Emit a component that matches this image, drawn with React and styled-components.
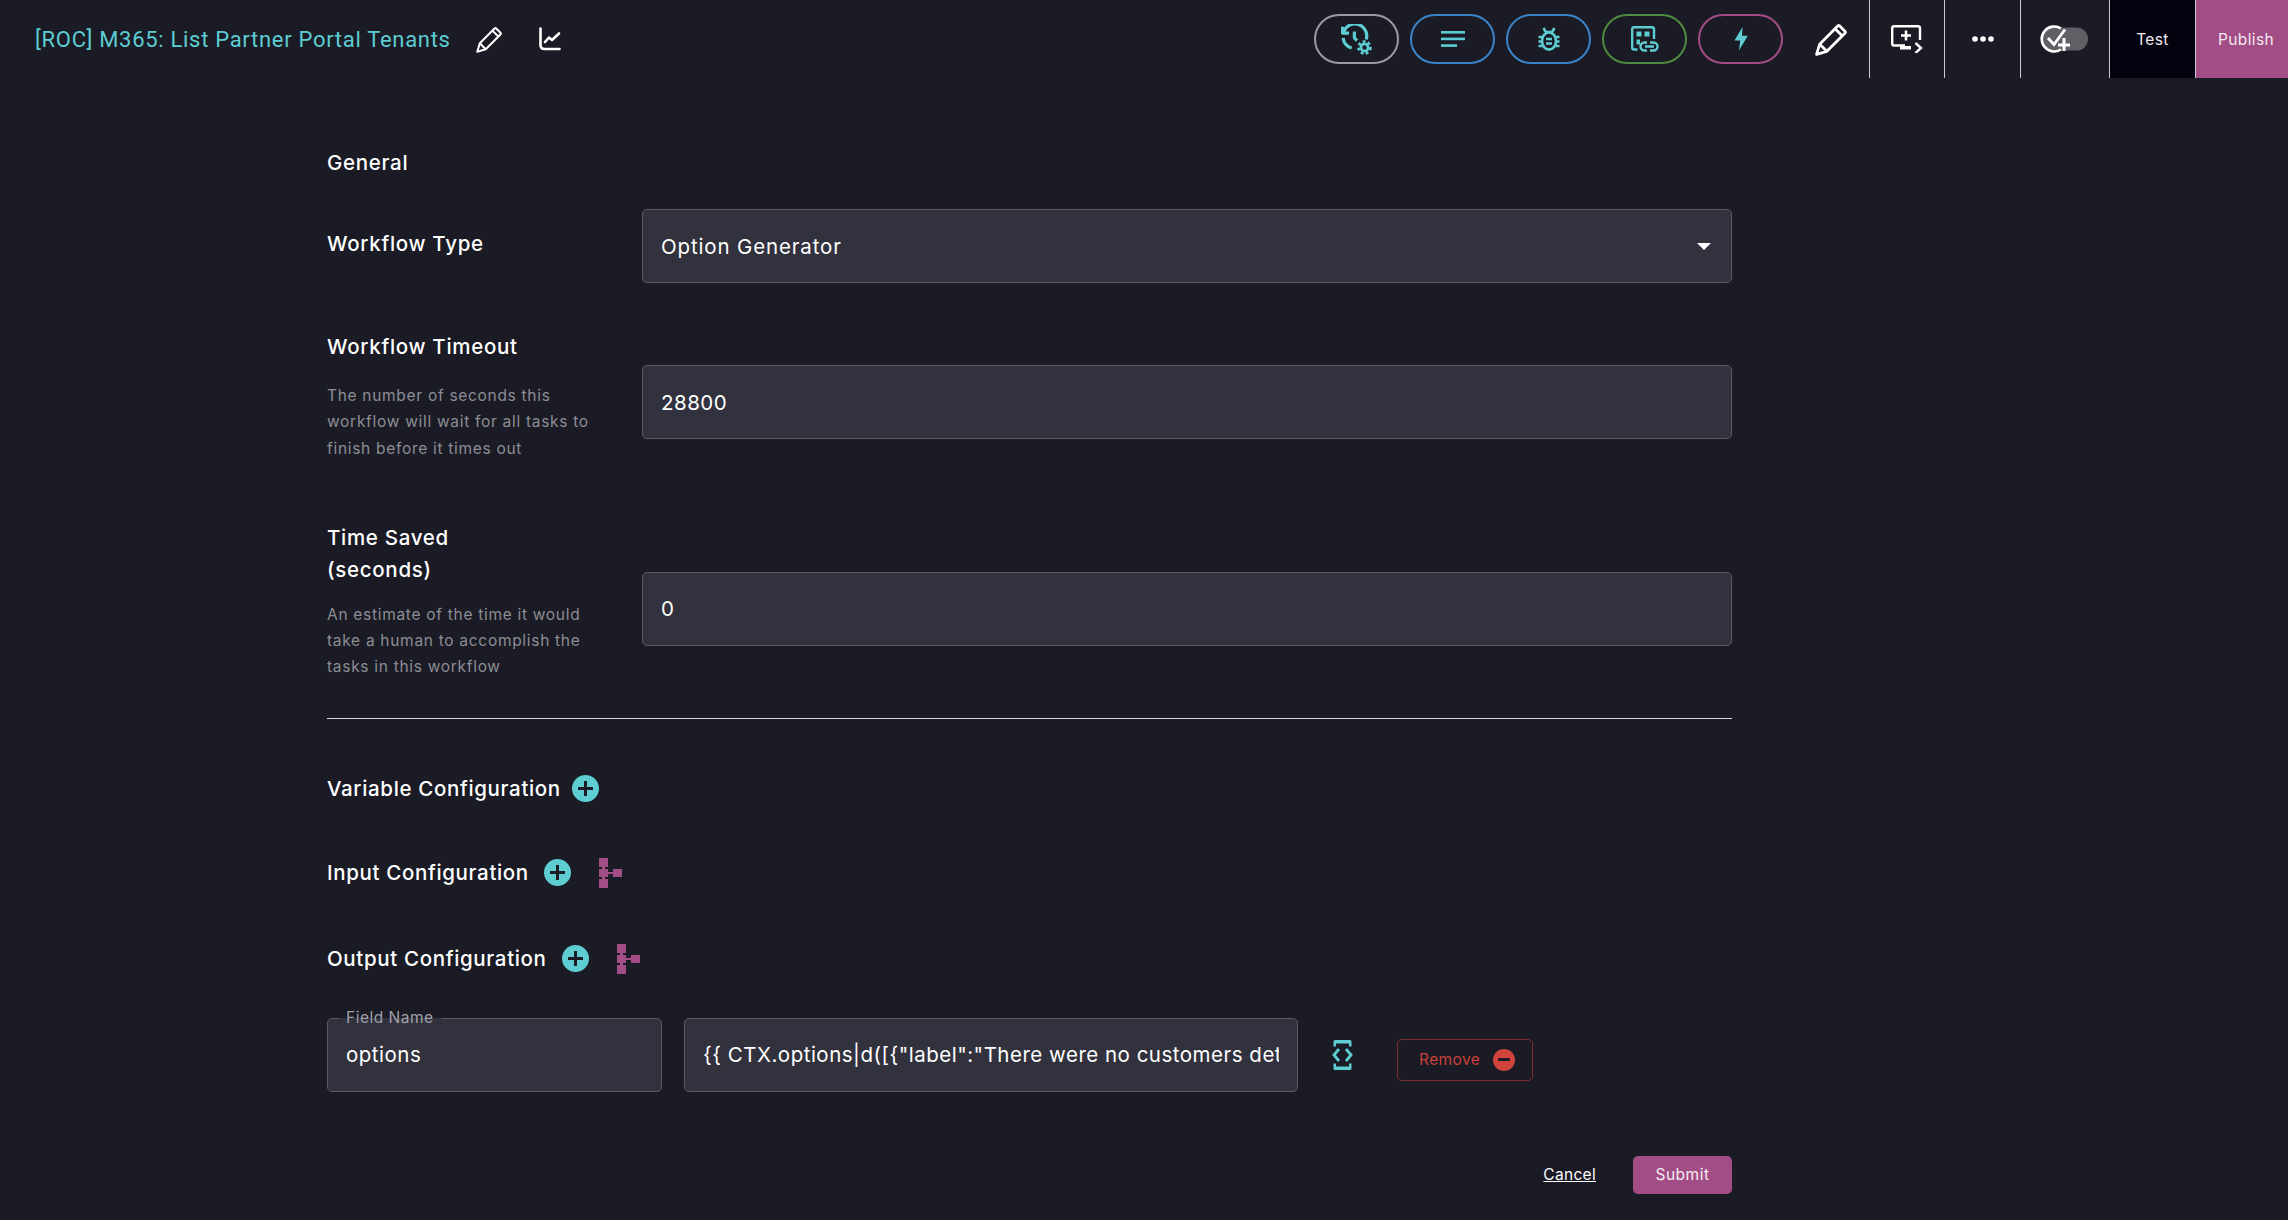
import styled, { createGlobalStyle } from 'styled-components'

const GlobalStyle = createGlobalStyle`
  html, body {
    margin: 0;
    background: #1a1b25;
    color: #fff;
    font-family: Inter, "Open Sans", sans-serif;
  }
  * { box-sizing: border-box; }
`

const Page = styled.div`
  width: 2288px;
  height: 1220px;
  overflow: hidden;
`

const Header = styled.header`
  display: flex;
  align-items: center;
  height: 78px;
`

const Title = styled.h1`
  margin: 0 0 0 35px;
  width: 415px;
  font: 400 22px Roboto, sans-serif;
  letter-spacing: 0.7px;
  white-space: nowrap;
  color: #5dcdd2;
`

const TitleIcons = styled.div`
  display: flex;
  align-items: center;
  gap: 36px;
  margin-left: 26px;
  flex: 1;
`

const Pills = styled.div`
  display: flex;
  gap: 11px;
  margin-right: 32px;
`

const Pill = styled.button`
  width: 85px;
  height: 50px;
  padding: 0;
  display: flex;
  align-items: center;
  justify-content: center;
  background: none;
  border: 2.5px solid ${p => p.$color};
  border-radius: 25px;
`

const PencilCell = styled.div`
  display: flex;
  align-items: center;
  margin-right: 21px;
`

const Cell = styled.div`
  width: ${p => p.$w}px;
  height: 78px;
  display: flex;
  align-items: center;
  justify-content: center;
  border-left: 1px solid #c9c9cf;
`

const ActionCell = styled(Cell)`
  padding-left: ${p => p.$pad || 0}px;
  background: ${p => p.$bg};
  font-size: 15.5px;
  letter-spacing: 0.4px;
  color: #f2e9ef;
`

const Main = styled.main`
  width: 1405px;
  margin-left: 327px;
  padding-top: 71px;
`

const SectionTitle = styled.h2`
  margin: 0;
  font-size: 20.5px;
  font-weight: 450;
  letter-spacing: 0.7px;
  line-height: 28px;
`

const FormRow = styled.div`
  display: grid;
  grid-template-columns: 315px 1090px;
  margin-top: ${p => p.$top}px;
`

const LabelCol = styled.div`
  padding-top: ${p => p.$pad || 0}px;
`

const FieldLabel = styled.div`
  width: 180px;
  font-size: 20.5px;
  font-weight: 450;
  letter-spacing: 0.7px;
  line-height: 32px;
  white-space: ${p => (p.$wrap ? 'normal' : 'nowrap')};
`

const Hint = styled.p`
  width: 270px;
  margin: ${p => p.$top}px 0 0;
  font-size: 15.5px;
  letter-spacing: 0.7px;
  line-height: 26.3px;
  color: #8d8d94;
`

const InputCol = styled.div`
  padding-top: ${p => p.$pad || 0}px;
`

const Input = styled.input`
  display: block;
  width: 100%;
  height: 74px;
  padding: 0 18px;
  background: #32323e;
  border: 1.5px solid #5b5b66;
  border-radius: 5px;
  color: #fff;
  font: 400 20.5px Inter, sans-serif;
  letter-spacing: 0.5px;
  outline: none;
`

const SelectBox = styled.div`
  display: flex;
  align-items: center;
  justify-content: space-between;
  height: 74px;
  padding: 0 20px 0 18px;
  background: #32323e;
  border: 1.5px solid #5b5b66;
  border-radius: 5px;
  font-size: 20.5px;
  letter-spacing: 0.85px;
`

const Caret = styled.span`
  width: 0;
  height: 0;
  border-left: 7px solid transparent;
  border-right: 7px solid transparent;
  border-top: 7px solid #fff;
`

const Rule = styled.hr`
  margin: 37px 0 0;
  border: 0;
  border-top: 1px solid #d5d5da;
`

const ConfigRow = styled.div`
  display: flex;
  align-items: center;
  height: 32px;
  margin-top: ${p => p.$top}px;
  font-size: 20.5px;
  font-weight: 450;
  letter-spacing: 0.65px;
`

const PlusButton = styled.span`
  position: relative;
  width: 27px;
  height: 27px;
  margin-left: ${p => p.$gap || 13}px;
  border-radius: 50%;
  background: #5dcdd2;
  &::before, &::after {
    content: '';
    position: absolute;
    background: #1a1b25;
  }
  &::before { left: 6px; right: 6px; top: 12px; height: 3px; }
  &::after { top: 6px; bottom: 6px; left: 12px; width: 3px; }
`

const TreeWrap = styled.span`
  display: flex;
  margin-left: 28px;
`

const OutputRow = styled.div`
  display: flex;
  align-items: center;
  margin-top: 43px;
`

const FieldBox = styled.div`
  position: relative;
  width: ${p => p.$w}px;
  margin-right: 22px;
`

const Legend = styled.span`
  position: absolute;
  left: 12px;
  top: -9px;
  padding: 0 7px;
  font-size: 15.5px;
  line-height: 18px;
  color: #a0a0a8;
  letter-spacing: 0.5px;
  background: linear-gradient(#1a1b25 50%, #32323e 50%);
`

const CodeWrap = styled.span`
  display: flex;
  margin: 0 44px 0 12px;
`

const RemoveButton = styled.button`
  display: flex;
  align-items: center;
  justify-content: space-between;
  width: 136px;
  height: 42px;
  margin-top: 10px;
  padding: 0 17px 0 21px;
  background: none;
  border: 1.5px solid #7a302f;
  border-radius: 5px;
  color: #c9403a;
  font: 400 15.5px Inter, sans-serif;
  letter-spacing: 0.4px;
`

const MinusDot = styled.span`
  display: flex;
  align-items: center;
  justify-content: center;
  width: 22px;
  height: 22px;
  border-radius: 50%;
  background: #d2443c;
  &::before {
    content: '';
    width: 12px;
    height: 3px;
    background: #1a1b25;
  }
`

const FormActions = styled.div`
  display: flex;
  align-items: center;
  justify-content: flex-end;
  gap: 37px;
  margin-top: 64px;
`

const CancelLink = styled.a`
  color: #fff;
  font-size: 15.5px;
  letter-spacing: 0.3px;
  text-decoration: underline;
`

const SubmitButton = styled.button`
  width: 99px;
  height: 38px;
  background: #a24d85;
  border: 0;
  border-radius: 5px;
  color: #f4ecf1;
  font: 400 15.5px Inter, sans-serif;
  letter-spacing: 0.5px;
`

const PencilIcon = ({ size, weight = 2.4 }) => (
  <svg width={size} height={size} viewBox="0 0 32 32" fill="none" stroke="#fff" strokeWidth={weight} strokeLinejoin="round">
    <path d="M1.5 30.5 L4.5 20.5 L22 3 Q23 2 24 3 L29 8 Q30 9 29 10 L11.5 27.5 Z" />
    <path d="M19.5 5.5 L26.5 12.5" />
    <path d="M4.5 20.5 L11.5 27.5" />
  </svg>
)

const ChartIcon = () => (
  <svg width="22" height="24" viewBox="0 0 22 24" fill="none" stroke="#fff" strokeWidth="2.6" strokeLinecap="round" strokeLinejoin="round">
    <path d="M1.5 1.5 V18 Q1.5 22 5.5 22 H20.5" />
    <path d="M6 15 L10 10.5 L13 13 L20 6.5" />
  </svg>
)

const HistoryIcon = () => (
  <svg width="31" height="31" viewBox="0 0 29 29" fill="none" stroke="#5dcdd2" strokeWidth="3" strokeLinecap="butt">
    <path d="M2.5 7.5 A11 11 0 1 1 23.5 14.5" />
    <path d="M2 13 A11 11 0 0 0 10 22.5" />
    <path d="M1.5 2.5 V8.5 H7.5" strokeLinejoin="round" />
    <path d="M12.5 7 V13 L15 15.5" />
    <circle cx="22" cy="22" r="3.4" strokeWidth="2.6" />
    <circle cx="22" cy="22" r="5.6" strokeWidth="2.4" strokeDasharray="2.6 2.2" />
  </svg>
)

const ListIcon = () => (
  <svg width="24" height="16" viewBox="0 0 24 16" fill="#5dcdd2">
    <rect width="24" height="2.6" y="0" />
    <rect width="24" height="2.6" y="6.6" />
    <rect width="16" height="2.6" y="13.3" />
  </svg>
)

const BugIcon = () => (
  <svg width="22" height="24" viewBox="0 0 22 24" fill="none" stroke="#5dcdd2" strokeWidth="2.6">
    <ellipse cx="11" cy="14" rx="7" ry="8.6" />
    <path d="M5.5 1 L7.5 4.5 M16.5 1 L14.5 4.5 M7 5 H15" />
    <path d="M0.5 10 H4.5 M0.5 14.5 H4.5 M0.5 19 H4.5 M17.5 10 H21.5 M17.5 14.5 H21.5 M17.5 19 H21.5" />
    <path d="M8 12 H14 M8 16.5 H14" />
  </svg>
)

const LinkBoardIcon = () => (
  <svg width="28" height="26" viewBox="0 0 28 26" fill="none" stroke="#5dcdd2" strokeWidth="2.4" strokeLinejoin="round">
    <path d="M6.5 23.5 H3 Q1.2 23.5 1.2 21.5 V3 Q1.2 1.2 3 1.2 H21 Q23 1.2 23 3 V13" />
    <rect x="5.5" y="5.5" width="5" height="5" fill="#5dcdd2" stroke="none" />
    <rect x="13.5" y="5.5" width="5" height="5" fill="#5dcdd2" stroke="none" />
    <rect x="5.5" y="13.5" width="3.5" height="5" fill="#5dcdd2" stroke="none" />
    <path d="M16 16.5 H13.5 a4 4 0 0 0 0 8 H16 M19 16.5 H22.5 a4 4 0 0 1 0 8 H19 M14 20.5 H23" />
  </svg>
)

const BoltIcon = () => (
  <svg width="14" height="24" viewBox="0 0 14 24" fill="#5dcdd2">
    <path d="M8.5 0 L0.5 13.5 H6.2 L5 23.5 L13.8 8.7 H8 Z" />
  </svg>
)

const ScreenIcon = () => (
  <svg width="32" height="28" viewBox="0 0 32 28" fill="none" stroke="#fff" strokeWidth="2.4">
    <path d="M14 20.5 H3 Q1.2 20.5 1.2 18.5 V3 Q1.2 1.2 3 1.2 H27 Q29 1.2 29 3 V15" />
    <path d="M15 5.5 V15.5 M10 10.5 H20" strokeWidth="2.6" />
    <rect x="9" y="21" width="11" height="3.5" fill="#fff" stroke="none" />
    <path d="M24.5 18 L30 23 L24.5 28" strokeWidth="2.4" />
  </svg>
)

const DotsIcon = () => (
  <svg width="22" height="6" viewBox="0 0 22 6" fill="#fff">
    <circle cx="3" cy="3" r="2.8" />
    <circle cx="11" cy="3" r="2.8" />
    <circle cx="19" cy="3" r="2.8" />
  </svg>
)

const CheckToggleIcon = () => (
  <svg width="50" height="28" viewBox="0 0 50 28" fill="none">
    <rect x="2" y="2.5" width="46" height="23" rx="11.5" fill="#5f6066" />
    <path d="M21 3.5 A12.5 12.5 0 1 0 21 24.5" stroke="#fff" strokeWidth="2.6" />
    <path d="M8 13 L14 19.5 L25 4.5" stroke="#fff" strokeWidth="2.8" />
    <path d="M24 13 V26 M18 20 H30" stroke="#fff" strokeWidth="3" />
  </svg>
)

const TreeIcon = () => (
  <svg width="23" height="30" viewBox="0 0 23 30" fill="#a24d85">
    <rect x="0" y="0" width="9" height="9" />
    <rect x="0" y="21" width="9" height="9" />
    <rect x="0" y="11" width="9" height="8" />
    <rect x="14" y="11" width="9" height="8" />
    <rect x="3" y="8" width="3" height="14" />
    <rect x="8" y="14" width="7" height="2" />
  </svg>
)

const CodeIcon = () => (
  <svg width="21" height="30" viewBox="0 0 21 30" fill="none" stroke="#5dcdd2">
    <path d="M1.5 1.5 Q1.5 0 3 0 H18 Q19.5 0 19.5 1.5 V6.5 H17 V3.5 H4 V6.5 H1.5 Z" fill="#5dcdd2" stroke="none" />
    <path d="M1.5 28.5 Q1.5 30 3 30 H18 Q19.5 30 19.5 28.5 V23.5 H17 V26.5 H4 V23.5 H1.5 Z" fill="#5dcdd2" stroke="none" />
    <path d="M7 9 L2 15 L7 21 M14 9 L19 15 L14 21" strokeWidth="2.8" />
  </svg>
)

const pills = [
  { color: '#9a9a9f', Icon: HistoryIcon },
  { color: '#3a84c9', Icon: ListIcon },
  { color: '#3a84c9', Icon: BugIcon },
  { color: '#4f8a3f', Icon: LinkBoardIcon },
  { color: '#a24d85', Icon: BoltIcon },
]

const App = () => {
  return (
    <Page>
      <GlobalStyle />
      <Header>
        <Title>[ROC] M365: List Partner Portal Tenants</Title>
        <TitleIcons>
          <PencilIcon size={27} />
          <ChartIcon />
        </TitleIcons>
        <Pills>
          {pills.map(({ color, Icon }, i) => (
            <Pill key={i} $color={color}><Icon /></Pill>
          ))}
        </Pills>
        <PencilCell><PencilIcon size={33} weight={2.7} /></PencilCell>
        <Cell $w={75}><ScreenIcon /></Cell>
        <Cell $w={76}><DotsIcon /></Cell>
        <Cell $w={89}><CheckToggleIcon /></Cell>
        <ActionCell $w={86} $bg="#02030f">Test</ActionCell>
        <ActionCell $w={93} $bg="#a24d85" $pad={8}>Publish</ActionCell>
      </Header>
      <Main>
        <SectionTitle>General</SectionTitle>
        <FormRow $top={32}>
          <LabelCol $pad={19}><FieldLabel>Workflow Type</FieldLabel></LabelCol>
          <InputCol>
            <SelectBox>Option Generator<Caret /></SelectBox>
          </InputCol>
        </FormRow>
        <FormRow $top={47}>
          <LabelCol $pad={1}>
            <FieldLabel>Workflow Timeout</FieldLabel>
            <Hint $top={20}>The number of seconds this workflow will wait for all tasks to finish before it times out</Hint>
          </LabelCol>
          <InputCol $pad={35}><Input readOnly value="28800" /></InputCol>
        </FormRow>
        <FormRow $top={59}>
          <LabelCol $pad={1}>
            <FieldLabel $wrap>Time Saved (seconds)</FieldLabel>
            <Hint $top={16}>An estimate of the time it would take a human to accomplish the tasks in this workflow</Hint>
          </LabelCol>
          <InputCol $pad={51}><Input readOnly value="0" /></InputCol>
        </FormRow>
        <Rule />
        <ConfigRow $top={54}>Variable Configuration<PlusButton $gap={11} /></ConfigRow>
        <ConfigRow $top={52}>Input Configuration<PlusButton $gap={15} /><TreeWrap><TreeIcon /></TreeWrap></ConfigRow>
        <ConfigRow $top={54}>Output Configuration<PlusButton $gap={15} /><TreeWrap><TreeIcon /></TreeWrap></ConfigRow>
        <OutputRow>
          <FieldBox $w={335}>
            <Legend>Field Name</Legend>
            <Input readOnly value="options" />
          </FieldBox>
          <FieldBox $w={614}>
            <Input readOnly value={'{{ CTX.options|d([{"label":"There were no customers detected"}])'} />
          </FieldBox>
          <CodeWrap><CodeIcon /></CodeWrap>
          <RemoveButton>Remove<MinusDot /></RemoveButton>
        </OutputRow>
        <FormActions>
          <CancelLink>Cancel</CancelLink>
          <SubmitButton>Submit</SubmitButton>
        </FormActions>
      </Main>
    </Page>
  )
}

export default App
